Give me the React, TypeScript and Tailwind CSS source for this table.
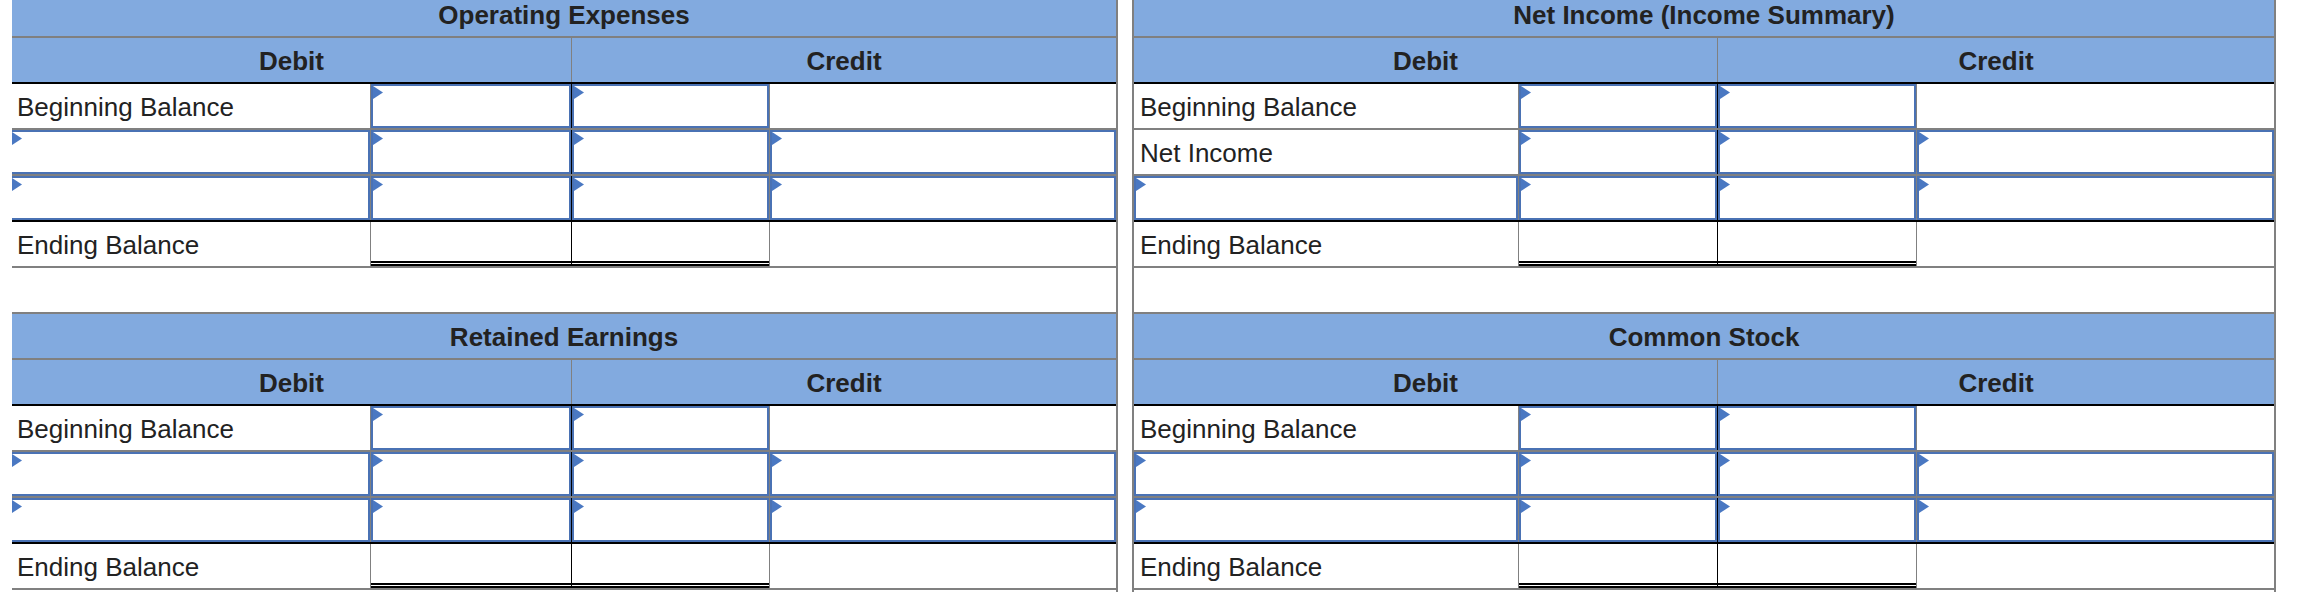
import React from "react"

type Side = "left" | "right"

interface Account {
  title: string
  // rows 1-3 of the label column, null means an entry box
  labels: (string | null)[]
  // rows 1-3 of the wide credit column
  wide: boolean[]
}

const operating: Account = {
  title: "Operating Expenses",
  labels: ["Beginning Balance", null, null],
  wide: [false, true, true],
}

const retained: Account = {
  title: "Retained Earnings",
  labels: ["Beginning Balance", null, null],
  wide: [false, true, true],
}

const netIncome: Account = {
  title: "Net Income (Income Summary)",
  labels: ["Beginning Balance", "Net Income", null],
  wide: [false, true, true],
}

const commonStock: Account = {
  title: "Common Stock",
  labels: ["Beginning Balance", null, null],
  wide: [false, true, true],
}

function Flag() {
  return (
    <svg className="absolute left-0 top-0" width="10" height="13" viewBox="0 0 10 13">
      <polygon points="0,0 10,6.5 0,13" fill="#4a78c2" />
    </svg>
  )
}

function Entry({ open }: { open?: boolean }) {
  return (
    <div className={`relative h-full w-full border-2 border-[#4a72b4] bg-white ${open ? "border-l-0" : ""}`}>
      <Flag />
    </div>
  )
}

function TAccount({ acct, side }: { acct: Account; side: Side }) {
  const cols = side === "left" ? "grid-cols-[358px_201px_198px_347px]" : "grid-cols-[384px_199px_199px_358px]"
  const head = side === "left" ? "grid-cols-[559px_1fr]" : "grid-cols-[583px_1fr]"
  const pad = side === "left" ? "pl-[5px]" : "pl-[6px]"

  return (
    <div className="flex flex-col">
      <div className="flex h-[46px] items-center justify-center border-t-2 border-[#808080] bg-[#82aadf] pt-[3px] font-bold">
        {acct.title}
      </div>
      <div className={`grid h-[46px] border-t-2 border-[#808080] bg-[#82aadf] font-bold ${head}`}>
        <div className="flex items-center justify-center pt-[3px]">Debit</div>
        <div className="flex items-center justify-center border-l border-[#808080] pt-[3px]">Credit</div>
      </div>

      {acct.labels.map((label, i) => (
        <div key={i} className={`grid h-[46px] border-t-2 ${i === 0 ? "border-black" : "border-[#808080]"} ${cols}`}>
          {label === null ? (
            <Entry open={side === "left"} />
          ) : (
            <div className={`flex items-center pt-[3px] ${pad}`}>{label}</div>
          )}
          <div className="border-l border-[#808080]">
            <Entry />
          </div>
          <div className="border-l border-black">
            <Entry />
          </div>
          <div className="border-l border-[#808080]">{acct.wide[i] && <Entry />}</div>
        </div>
      ))}

      <div className={`grid h-[46px] border-t-2 border-black ${cols}`}>
        <div className={`flex items-center pt-[3px] ${pad}`}>Ending Balance</div>
        <div className="border-l border-[#808080]">
          <div className="h-full border-b-[5px] border-double border-black" />
        </div>
        <div className="border-l border-black">
          <div className="h-full border-b-[5px] border-double border-black" />
        </div>
        <div className="border-l border-[#808080]" />
      </div>
    </div>
  )
}

function Column({ top, bottom, side }: { top: Account; bottom: Account; side: Side }) {
  return (
    <div
      className={
        side === "left"
          ? "flex w-[1106px] flex-col border-r-2 border-[#808080]"
          : "flex w-[1144px] flex-col border-x-2 border-[#808080]"
      }
    >
      <TAccount acct={top} side={side} />
      <div className="h-[46px] border-t-2 border-[#808080]" />
      <TAccount acct={bottom} side={side} />
      <div className="h-[8px] border-t-2 border-[#808080]" />
    </div>
  )
}

export default function App() {
  return (
    <div className="h-[592px] w-[2320px] overflow-hidden bg-white font-['Liberation_Sans',Arial,sans-serif] text-[26px] text-[#222222]">
      <div className="-mt-[10px] flex gap-[14px] pl-[12px]">
        <Column top={operating} bottom={retained} side="left" />
        <Column top={netIncome} bottom={commonStock} side="right" />
      </div>
    </div>
  )
}
